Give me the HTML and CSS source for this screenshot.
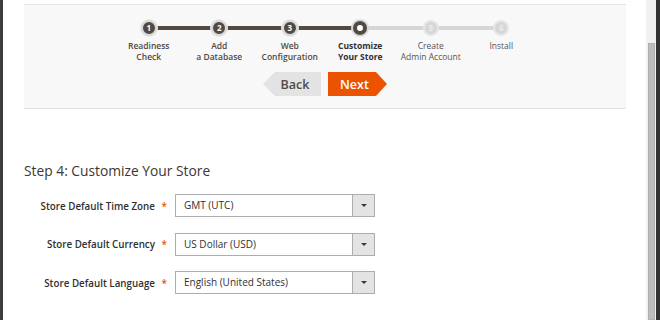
FILE: index.html
```html
<!DOCTYPE html>
<html>
<head>
<meta charset="utf-8">
<link rel="stylesheet" href="styles.css">
</head>
<body>
<div class="frame">
  <div class="edge-left"></div>
  <main class="main">
    <section class="nav-panel">
      <ol class="steps">
        <li class="step done"><span class="dot">1</span><span class="label">Readiness<br>Check</span></li>
        <li class="step done"><span class="dot">2</span><span class="label">Add<br>a Database</span></li>
        <li class="step done"><span class="dot">3</span><span class="label">Web<br>Configuration</span></li>
        <li class="step done current"><span class="dot"></span><span class="label">Customize<br>Your Store</span></li>
        <li class="step todo"><span class="dot">5</span><span class="label">Create<br>Admin Account</span></li>
        <li class="step todo"><span class="dot">6</span><span class="label">Install</span></li>
      </ol>
      <div class="actions">
        <button class="btn btn-back">Back</button>
        <button class="btn btn-next">Next</button>
      </div>
    </section>
    <h2 class="title">Step 4: Customize Your Store</h2>
    <form class="form">
      <div class="row">
        <label class="lbl">Store Default Time Zone <span class="req">*</span></label>
        <div class="select"><span class="value">GMT (UTC)</span><span class="arrow"></span></div>
      </div>
      <div class="row">
        <label class="lbl">Store Default Currency <span class="req">*</span></label>
        <div class="select"><span class="value">US Dollar (USD)</span><span class="arrow"></span></div>
      </div>
      <div class="row">
        <label class="lbl">Store Default Language <span class="req">*</span></label>
        <div class="select"><span class="value">English (United States)</span><span class="arrow"></span></div>
      </div>
    </form>
  </main>
  <div class="scrollbar"><div class="thumb"></div></div>
  <div class="edge-right"></div>
</div>
</body>
</html>
```
FILE: styles.css
```css
* { box-sizing: border-box; }
html, body { margin: 0; padding: 0; background: #fff; }
body { font-family: "Open Sans", "Noto Sans", sans-serif; color: #303030; }
.frame { display: flex; width: 660px; height: 320px; overflow: hidden; }
.edge-left { width: 3px; background: #3c3c3c; flex: none; }
.edge-right { width: 4px; background: #333; flex: none; }
.main { flex: 1; padding: 4px 20px 0 21px; }
.scrollbar { width: 10px; flex: none; background: #f1f1f1; padding-top: 43px; display: flex; justify-content: center; }
.thumb { width: 7px; height: 100%; background: #bdbdbd; border: 1px solid #b0b0b0; }

.nav-panel { background: #f8f8f8; border-top: 1px solid #e3e3e3; border-bottom: 1px solid #e3e3e3; padding: 15px 0 12px; }
.steps { list-style: none; margin: 0; padding: 0; display: flex; justify-content: center; }
.step { width: 70.5px; display: flex; flex-direction: column; align-items: center; position: relative; }
.step + .step::before { content: ""; position: absolute; top: 6px; left: -50%; width: 100%; height: 4px; background: #514943; z-index: 0; }
.step.todo::before { background: #d6d6d6; }
.dot { position: relative; z-index: 1; width: 16px; height: 16px; border-radius: 50%; background: #514943; border: 2px solid #d9d9d9; box-shadow: 0 0 0 1px #e8e8e8; color: #fff; font-size: 8px; font-weight: 700; line-height: 12px; text-align: center; }
.current .dot { background: #fff; border: 4px solid #514943; box-shadow: 0 0 0 2px #d9d9d9; width: 14px; height: 14px; margin: 1px 0; }
.todo .dot { background: #d6d6d6; border-color: #e6e6e6; color: #ececec; box-shadow: none; }
.label { margin-top: 5px; font-size: 8.5px; line-height: 10.5px; text-align: center; color: #514943; font-weight: 600; white-space: nowrap; }
.current .label { color: #303030; font-weight: 700; }
.todo .label { color: #555; font-weight: 400; }

.actions { display: flex; justify-content: center; gap: 7px; margin-top: 10px; }
.btn { border: 0; height: 24px; font-family: inherit; font-size: 12.5px; font-weight: 600; padding: 0; cursor: pointer; }
.btn-back { width: 58px; background: #e3e3e3; color: #514943; padding-left: 6px; clip-path: polygon(12px 0, 100% 0, 100% 100%, 12px 100%, 0 50%); }
.btn-next { width: 59px; background: #eb5202; color: #fff; padding-right: 6px; clip-path: polygon(0 0, calc(100% - 11px) 0, 100% 50%, calc(100% - 11px) 100%, 0 100%); }

.title { margin: 52px 0 0; font-size: 13.8px; font-weight: 400; color: #41362f; line-height: 20px; }
.form { margin-top: 13px; display: flex; flex-direction: column; gap: 15.5px; }
.row { display: flex; align-items: center; }
.lbl { width: 143px; text-align: right; font-size: 9.8px; font-weight: 600; color: #303030; margin-right: 8px; white-space: nowrap; }
.req { color: #eb5202; margin-left: 4px; font-size: 10px; }
.select { width: 200px; height: 23px; border: 1px solid #adadad; background: #fff; display: flex; align-items: stretch; }
.value { flex: 1; padding-left: 8px; font-size: 10px; line-height: 21px; color: #303030; }
.arrow { width: 22px; background: #e3e3e3; border-left: 1px solid #adadad; display: flex; align-items: center; justify-content: center; }
.arrow::after { content: ""; border-left: 3px solid transparent; border-right: 3px solid transparent; border-top: 3px solid #41362f; }
```
